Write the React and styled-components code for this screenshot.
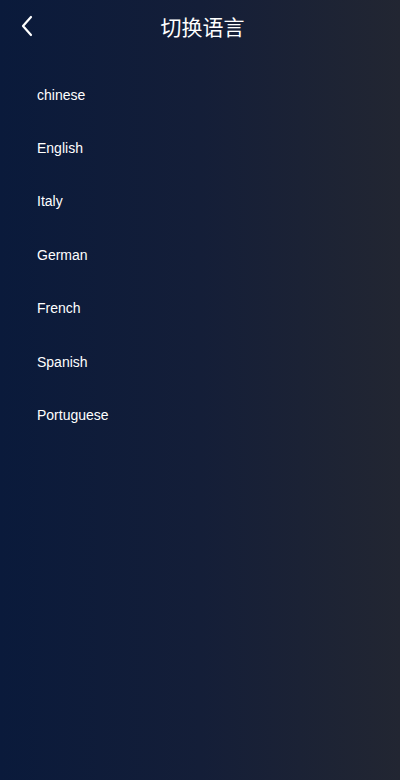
import React from 'react';
import styled, { createGlobalStyle } from 'styled-components';

const Global = createGlobalStyle`
  html, body { margin: 0; padding: 0; }
  body { font-family: "Liberation Sans", Arial, sans-serif; }
`;

const Page = styled.div`
  width: 400px;
  min-height: 780px;
  background: linear-gradient(90deg, #0a1a3b 0%, #141e38 50%, #222632 100%);
  color: #fff;
`;

const Header = styled.div`
  height: 52px;
  display: flex;
  align-items: center;
  justify-content: center;
  position: relative;
`;

const Back = styled.button`
  position: absolute;
  left: 15px;
  top: 12px;
  width: 24px;
  height: 28px;
  padding: 0;
  border: none;
  background: none;
  display: flex;
  align-items: center;
  justify-content: center;
  cursor: pointer;
`;

const Title = styled.h1`
  margin: 0;
  font-family: "Noto Sans CJK SC", sans-serif;
  font-weight: 400;
  font-size: 21px;
  line-height: 1;
  padding-left: 5px;
`;

const List = styled.ul`
  list-style: none;
  margin: 0;
  padding: 16px 0 0;
`;

const Item = styled.li`
  height: 53.4px;
  display: flex;
  align-items: center;
  padding-left: 37px;
  font-size: 14px;
  cursor: pointer;
`;

const languages = ['chinese', 'English', 'Italy', 'German', 'French', 'Spanish', 'Portuguese'];

export default function App() {
  return (
    <Page>
      <Global />
      <Header>
        <Back aria-label="back">
          <svg width="14" height="22" viewBox="0 0 14 22">
            <polyline points="11,2 3,11 11,20" fill="none" stroke="#fff" strokeWidth="2.2" strokeLinecap="round" strokeLinejoin="round" />
          </svg>
        </Back>
        <Title>切换语言</Title>
      </Header>
      <List>
        {languages.map((lang) => (
          <Item key={lang}>{lang}</Item>
        ))}
      </List>
    </Page>
  );
}
